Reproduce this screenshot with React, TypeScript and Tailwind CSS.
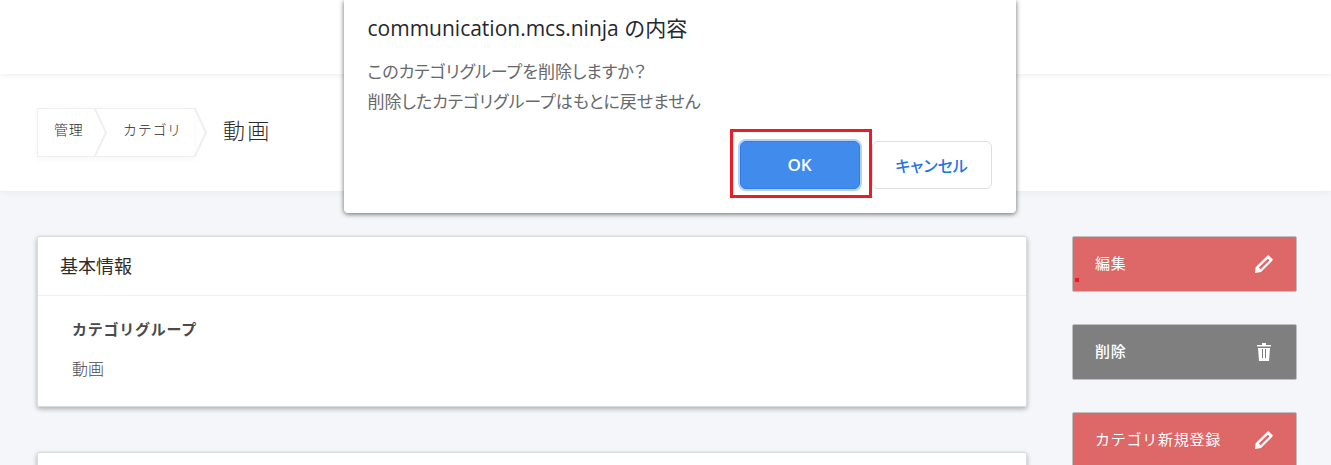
import React from 'react';

const jpFont = "font-['Noto_Sans_CJK_JP',sans-serif]";

const PencilIcon: React.FC = () => (
  <svg width="18" height="18" viewBox="0 0 18 18" aria-hidden="true">
    <path
      fillRule="evenodd"
      fill="currentColor"
      d="M13.2 0 18 4.6 16.6 6.6 6 17 0 18 .6 12.2 11.6 1.4ZM12.8 3.7 3.9 12.5 5.6 14.2 14.5 5.4Z"
    />
  </svg>
);

const TrashIcon: React.FC = () => (
  <svg width="18" height="18" viewBox="0 0 18 18" aria-hidden="true">
    <path
      fillRule="evenodd"
      fill="currentColor"
      d="M7 0h4v2h5v1.5H2V2h5ZM3 5h12l-1 13H4ZM7 6v9h1v-9ZM10 6v9h1v-9Z"
    />
  </svg>
);

const Chevron: React.FC = () => (
  <svg width="13" height="49" viewBox="0 0 13 49" className="shrink-0" aria-hidden="true">
    <path d="M.5 0 12 24.5.5 49" fill="none" stroke="#efefef" strokeWidth="2" />
  </svg>
);

const actions = [
  { label: '編集', icon: <PencilIcon />, color: 'bg-[#de6767]', weight: 'font-normal', marked: true },
  { label: '削除', icon: <TrashIcon />, color: 'bg-[#7f7f7f]', weight: 'font-medium', marked: false },
  { label: 'カテゴリ新規登録', icon: <PencilIcon />, color: 'bg-[#de6767]', weight: 'font-normal', marked: false },
];

const Breadcrumb: React.FC = () => (
  <nav className="flex items-center" aria-label="breadcrumb">
    <div className="flex items-center">
      <div className="flex h-[49px] items-center border border-r-0 border-[#efefef] shadow-[0_2px_8px_rgba(0,0,0,0.04)]">
        <a href="#admin" className="w-14 pb-2 pl-4 text-[14px] font-light leading-5 tracking-wider whitespace-nowrap">管理</a>
        <Chevron />
        <a href="#category" className="w-[87px] pb-2 pl-4 text-[14px] font-light leading-5 tracking-wider whitespace-nowrap">カテゴリ</a>
      </div>
      <Chevron />
    </div>
    <h1 className="ml-4 pb-2 text-[22px] font-light leading-8 tracking-widest">動画</h1>
  </nav>
);

const ConfirmDialog: React.FC = () => (
  <div className="pointer-events-none absolute inset-x-0 top-0 flex justify-center pl-7">
    <div
      role="dialog"
      aria-labelledby="dialog-title"
      className="pointer-events-auto w-[672px] rounded-b-sm bg-white px-6 pb-6 pt-3 shadow-[0_1px_5px_rgba(0,0,0,0.6)]"
    >
      <h2 id="dialog-title" className="font-['Open_Sans','Noto_Sans_CJK_JP',sans-serif] text-[21px] leading-8 text-[#26272b]">
        communication.mcs.ninja の内容
      </h2>
      <p className="mt-3 text-[17px] leading-[30px] text-[#66686c] [font-feature-settings:'palt']">
        このカテゴリグループを削除しますか？
        <br />
        削除したカテゴリグループはもとに戻せません
      </p>
      <div className="mt-[25px] flex justify-end gap-3">
        <div className="relative">
          <button type="button" className="h-12 w-[120px] rounded-md border border-[#2f7de9] bg-[#418bec] font-['Open_Sans',sans-serif] text-[17px] font-semibold text-white ring-2 ring-[#b5d3f8]">
            OK
          </button>
          <span className="pointer-events-none absolute -bottom-[9px] -left-[10px] -right-3 -top-3 border-3 border-[#ed1c24]" />
        </div>
        <button type="button" className="h-12 w-[120px] rounded-md border border-[#dcdee1] bg-white text-[16px] font-medium text-[#2374e4] [font-feature-settings:'palt']">
          キャンセル
        </button>
      </div>
    </div>
  </div>
);

export default function App() {
  return (
    <div className={`relative h-screen overflow-hidden bg-[#f5f6fa] text-[#2b2b2b] ${jpFont}`}>
      {/* Top bar */}
      <header className="relative h-[74px] bg-white shadow-[0_1px_6px_rgba(0,0,0,0.08)]" />

      {/* Page heading */}
      <div className="bg-white px-[37px] py-[34px] shadow-[0_1px_8px_rgba(0,0,0,0.06)]">
        <Breadcrumb />
      </div>

      <div className="flex gap-[45px] pl-[37px] pr-[34px] pt-[45px]">
        <main className="flex flex-1 flex-col gap-[45px]">
          <section className="rounded-xs border border-[#dadbdd] bg-white shadow-[0_2px_5px_rgba(0,0,0,0.3)]">
            <h2 className="border-b border-[#f1f1f1] px-[22px] pb-[15px] pt-[13px] text-[18px] leading-[30px]">基本情報</h2>
            <dl className="px-[34px] pb-[26px] pt-[21px]">
              <dt className="text-[15px] font-bold leading-6 tracking-wider text-[#4a4a4a]">カテゴリグループ</dt>
              <dd className="mt-[15px] text-[16px] font-light leading-6 text-[#4a4a4a]">動画</dd>
            </dl>
          </section>
          <section className="h-[171px] rounded-xs border border-[#dadbdd] bg-white shadow-[0_2px_5px_rgba(0,0,0,0.3)]" />
        </main>

        <aside className="flex w-[225px] flex-col gap-8">
          {actions.map((action) => (
            <button
              key={action.label}
              type="button"
              className={`relative flex h-14 items-center justify-between rounded-xs border border-[#bfbfbf] pl-[22px] pr-[23px] text-white ${action.color}`}
            >
              <span className={`pb-0.5 text-[15px] leading-6 tracking-wider ${action.weight}`}>{action.label}</span>
              {action.icon}
              {action.marked && <span className="absolute bottom-[9px] left-0.5 size-1 bg-[#ed1c24]" />}
            </button>
          ))}
        </aside>
      </div>

      <ConfirmDialog />
    </div>
  );
}
